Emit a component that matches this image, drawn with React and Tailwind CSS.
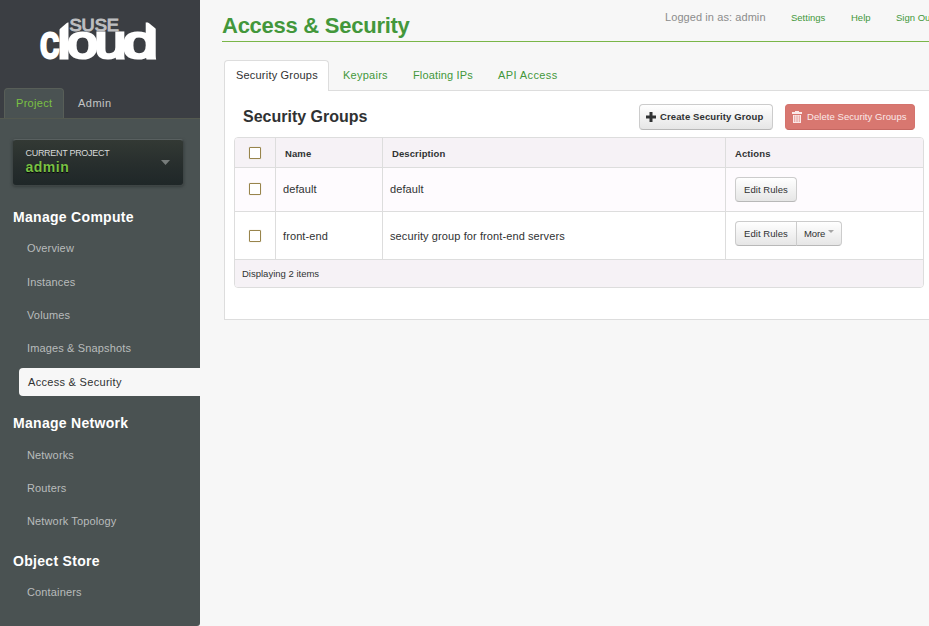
import React from "react";

const sections = [
  {
    title: "Manage Compute",
    titleClass: "h-[28px]",
    className: "mb-[13px]",
    items: [
      { label: "Overview", className: "h-[34px]" },
      { label: "Instances", className: "h-[33px]" },
      { label: "Volumes", className: "h-[33px]" },
      { label: "Images & Snapshots", className: "h-[37px]" },
      { label: "Access & Security", active: true },
    ],
  },
  {
    title: "Manage Network",
    titleClass: "h-[29px]",
    className: "mb-[10px]",
    items: [
      { label: "Networks", className: "h-[33px]" },
      { label: "Routers", className: "h-[33px]" },
      { label: "Network Topology", className: "h-[33px]" },
    ],
  },
  {
    title: "Object Store",
    titleClass: "h-[28px]",
    className: "",
    items: [{ label: "Containers", className: "h-[33px]" }],
  },
];

const cloudLetters = [
  { ch: "c", x: 0, length: 19 },
  { ch: "l", x: 17.7, length: 12.5 },
  { ch: "o", x: 27.3, length: 30.500 },
  { ch: "u", x: 54.7, length: 31.500 },
  { ch: "d", x: 82.8, length: 35 },
];

function Logo() {
  return (
    <svg width="116" height="50" viewBox="0 0 116 50" className="block overflow-visible" role="img" aria-label="SUSE cloud">
      <g fill="#ffffff" stroke="#ffffff" strokeWidth="3.2" strokeLinejoin="miter" fontFamily="'Liberation Sans', Arial, sans-serif" fontSize="46" fontWeight="400">
        {cloudLetters.map((l) => (
          <text key={l.ch} x={l.x} y="41.3" textLength={l.length} lengthAdjust="spacingAndGlyphs">{l.ch}</text>
        ))}
      </g>
      <path d="M18 3H28.500V4.500L18 13.500Z" fill="#3b3e43" />
      <path d="M107 3H118V13.500L107 4.500Z" fill="#3b3e43" />
      <text x="29.5" y="13.500" textLength="49.500" lengthAdjust="spacingAndGlyphs" fontSize="16.500" fontWeight="400" fill="#bdbec0" stroke="#bdbec0" strokeWidth="1" fontFamily="'Liberation Sans', Arial, sans-serif">SUSE</text>
    </svg>
  );
}

function Sidebar() {
  return (
    <aside className="flex h-[626px] w-[200px] shrink-0 flex-col overflow-hidden rounded-br-[3px] bg-[#4a5252]">
      <div className="flex h-[119px] shrink-0 flex-col justify-between border-b border-[#54594f] bg-[#3b3e43]">
        <div className="pt-[17px] pl-[40px]"><Logo /></div>
        <div className="flex h-[30px] pl-1 text-[11px] leading-[30px]">
          <div className="w-[60px] rounded-t-[4px] border border-b-0 border-[#585e58] bg-[#4a5252] pl-[11px] leading-[28px] tracking-[0.3px] text-[#7ac143]">Project</div>
          <div className="pl-[14px] tracking-[0.5px] text-[#c4c6c6]">Admin</div>
        </div>
      </div>
      <div className="mt-[20px] ml-[12px] flex h-[47px] w-[172px] shrink-0 items-center justify-between rounded-[4px] border border-[#3e4545] border-t-[#596060] bg-linear-to-b from-[#333934] via-[#272e2d] via-55% to-[#1f2728] pr-[13px] pl-[12.5px] shadow-[0_1px_3px_#353c3c]">
        <div className="flex flex-col pb-[2px]">
          <span className="text-[9px] leading-[11px] tracking-[-0.3px] text-[#d8dada]">CURRENT PROJECT</span>
          <span className="text-[14px] leading-[17px] font-bold tracking-[0.500px] text-[#7ac143] [text-shadow:0_1px_1px_#000]">admin</span>
        </div>
        <svg width="9" height="5" viewBox="0 0 9 5"><path d="M0 0H9L4.5 5Z" fill="#777c7b" /></svg>
      </div>
      <nav className="flex flex-col pt-[17px]">
        {sections.map((s) => (
          <section key={s.title} className={s.className}>
            <h3 className={"pl-[13px] text-[14px] leading-[28px] font-bold tracking-[0.3px] text-white " + s.titleClass}>{s.title}</h3>
            <ul>
              {s.items.map((i) => (
                <li key={i.label} className={i.active ? "ml-[19px] h-[28px] rounded-l-[4px] bg-[#f7f7f7] pl-[9px] text-[11px] leading-[28px] tracking-[0.3px] text-[#303233]" : "pl-[27px] text-[11px] leading-[34px] tracking-[0.14px] text-[#b9bcbc] " + i.className}>{i.label}</li>
              ))}
            </ul>
          </section>
        ))}
      </nav>
    </aside>
  );
}

function Checkbox() {
  return <div role="checkbox" aria-checked="false" className="h-3 w-3 rounded-[1px] border border-[#98844c] bg-white shadow-[0_0_1px_#c8bc9c]" />;
}

const cell = "flex items-center border-r border-[#dddddd] ";
const grid = "grid grid-cols-[41px_107px_343px_197px] border-b border-[#dddddd] ";
const button = "flex h-[25px] items-center border border-[#cccccc] border-b-[#b8b8b8] bg-linear-to-b from-white to-[#e6e6e6] pt-[2px] text-[9.5px] text-[#2f3132] ";

function Row({ name, description, more, className, checkClass, textClass }) {
  return (
    <div className={grid + className}>
      <div className={cell + "justify-center " + checkClass}><Checkbox /></div>
      <div className={cell + "pl-[7px] text-[11px] tracking-[0.1px] " + textClass}>{name}</div>
      <div className={cell + "pl-[7px] text-[11px] tracking-[0.1px] " + textClass}>{description}</div>
      <div className="flex items-start pt-[9px] pl-[9px]">
        <div className={button + (more ? "w-[62px] rounded-l-[4px] pl-2" : "w-[62px] rounded-[4px] pl-2")}>
          <span className="tracking-[0.06px]">Edit Rules</span>
        </div>
        {more && (
          <div className={button + "-ml-px w-[46px] gap-[3px] rounded-r-[4px] pl-[7px]"}>
            <span className="tracking-[-0.15px]">More</span>
            <svg width="6" height="3" viewBox="0 0 6 3" className="mb-[6px]"><path d="M0 0H6L3 3Z" fill="#a5a5a5" /></svg>
          </div>
        )}
      </div>
    </div>
  );
}

function GroupsTable() {
  return (
    <div className="w-[690px] overflow-hidden rounded-[4px] border border-[#dddddd] text-[#303233]">
      <div className={grid + "h-[30px] bg-[#f6f2f6] text-[9.5px] font-bold tracking-[0.1px]"}>
        <div className={cell + "justify-center"}><Checkbox /></div>
        <div className={cell + "pt-[3px] pl-[9px]"}>Name</div>
        <div className={cell + "pt-[3px] pl-[9px]"}>Description</div>
        <div className="flex items-center pt-[3px] pl-[9px]">Actions</div>
      </div>
      <Row name="default" description="default" className="h-[44px] bg-[#fefbfe]" checkClass="pb-[1px]" textClass="" />
      <Row name="front-end" description="security group for front-end servers" more className="h-[48px] bg-white" checkClass="" textClass="pt-[2px]" />
      <div className="h-[27px] bg-[#f6f2f6] pl-[7px] text-[9.5px] leading-[28px]">Displaying 2 items</div>
    </div>
  );
}

export default function App() {
  return (
    <div className="flex h-[626px] w-[929px] overflow-hidden bg-[#f7f7f7] font-['Liberation_Sans',Arial,sans-serif]">
      <Sidebar />
      <main className="min-w-0 flex-1 overflow-hidden">
        <header className="ml-[22px] flex h-[42px] justify-between border-b border-[#7ab648] whitespace-nowrap">
          <h1 className="pt-[10px] text-[22px] leading-[31px] font-bold tracking-[-0.26px] text-[#43973b]">Access &amp; Security</h1>
          <div className="flex w-[264px] shrink-0 text-[9.5px] leading-[35px] text-[#43973b]">
            <span className="w-[126px] shrink-0 text-[11px] tracking-[0.08px] text-[#8c8c8c]">Logged in as: admin</span>
            <span className="w-[60px] shrink-0">Settings</span>
            <span className="w-[45px] shrink-0">Help</span>
            <span className="shrink-0">Sign Out</span>
          </div>
        </header>
        <div className="mt-[18px] ml-[24px]">
          <div className="flex h-[31px] border-b border-[#dddddd] text-[11px] leading-[29px] text-[#43973b]">
            <div className="mr-[14px] h-[31px] w-[105px] shrink-0 rounded-t-[4px] border border-b-0 border-[#dddddd] bg-white pl-[11px] tracking-[0.2px] text-[#303233]">Security Groups</div>
            <span className="w-[70px] pt-px tracking-[0.25px]">Keypairs</span>
            <span className="w-[85px] pt-px tracking-[0.15px]">Floating IPs</span>
            <span className="pt-px tracking-[0.4px]">API Access</span>
          </div>
          <section className="h-[229px] w-[720px] border-b border-l border-[#dddddd] bg-white pt-[13px] pl-[9px]">
            <div className="flex h-[33px] w-[681px] items-start">
              <h2 className="flex-1 pl-[9px] text-[16px] leading-[25px] font-bold text-[#303233]">Security Groups</h2>
              <div className="mr-[12px] flex h-[26px] w-[134px] items-center gap-[4px] rounded-[4px] border border-[#cccccc] border-b-[#b8b8b8] bg-linear-to-b from-white to-[#e6e6e6] pl-[6px] text-[9.5px] font-bold tracking-[0.12px] whitespace-nowrap text-[#2f3132]">
                <svg width="10" height="10" viewBox="0 0 10 10" className="shrink-0"><path d="M3.500 0h3v3.500H10v3H6.500V10h-3V6.500H0v-3h3.500Z" fill="#303233" /></svg>
                Create Security Group
              </div>
              <div className="flex h-[26px] w-[130px] items-center gap-[5px] rounded-[4px] border border-[#d4736d] border-b-[#c56862] bg-[#d87770] pl-[6px] text-[9.5px] tracking-[0.06px] whitespace-nowrap text-[#fbe9e8]">
                <svg width="10" height="12" viewBox="0 0 10 12" fill="#fbe9e8" className="shrink-0">
                  <path d="M3 0h4v1h3v2H0V1h3Z" />
                  <path d="M1 4h8v8H1Z" />
                  <path d="M2.500 4.500v6.500M4.200 4.500v6.500M5.800 4.500v6.500M7.500 4.500v6.500" stroke="#d87770" strokeWidth="0.5" />
                </svg>
                Delete Security Groups
              </div>
            </div>
            <GroupsTable />
          </section>
        </div>
      </main>
    </div>
  );
}
